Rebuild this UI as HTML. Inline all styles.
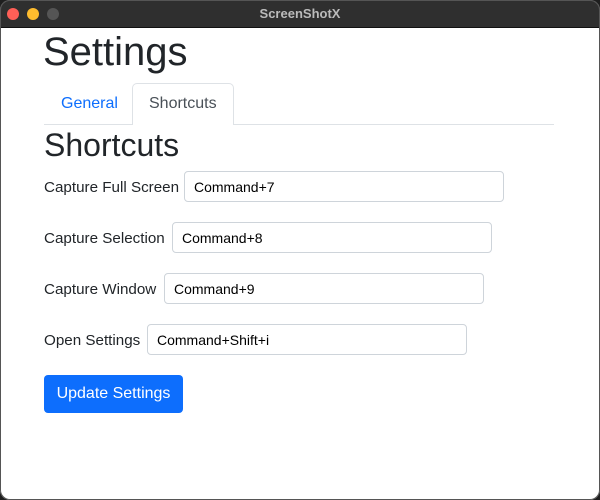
<!DOCTYPE html>
<html><head><style>
*{margin:0;padding:0;box-sizing:border-box}
body{width:600px;height:500px;background:#1e1e1e;font-family:"Liberation Sans",sans-serif;position:relative;overflow:hidden}
.win{position:absolute;left:0;top:0;width:600px;height:500px;background:#fff;border-radius:10px;overflow:hidden}
.bd{position:absolute;left:0;top:0;width:600px;height:500px;border-radius:10px;border:1px solid #555;pointer-events:none}
.tb{position:absolute;left:0;top:0;width:600px;height:28px;background:#2f2f2f;border-bottom:1px solid #111}
.dot{position:absolute;top:8px;width:12px;height:12px;border-radius:50%}
.tt{position:absolute;top:6px;width:600px;text-align:center;color:#bbb;font-size:13px;font-weight:bold}
.a{position:absolute;white-space:nowrap;color:#212529}
.l{font-size:15.2px}
.inp{position:absolute;height:31px;width:320px;border:1px solid #ced4da;border-radius:4px;font-size:14px;padding:7px 9px;color:#000}
</style></head><body>
<div class="win">
<div class="tb">
<div class="dot" style="left:7px;background:#fe5f57"></div>
<div class="dot" style="left:27px;background:#febc2e"></div>
<div class="dot" style="left:47px;background:#555"></div>
<div class="tt">ScreenShotX</div>
</div>
<div class="a" style="left:43px;top:30px;font-size:40px;font-weight:500">Settings</div>
<div style="position:absolute;left:44px;top:124px;width:510px;height:1px;background:#dee2e6"></div>
<div style="position:absolute;left:132px;top:83px;width:102px;height:42px;border:1px solid #dee2e6;border-bottom:none;border-radius:5px 5px 0 0;background:#fff"></div>
<div class="a" style="left:61px;top:95px;font-size:16px;color:#0d6efd">General</div>
<div class="a" style="left:149px;top:95px;font-size:16px;color:#495057">Shortcuts</div>
<div class="a" style="left:44px;top:127px;font-size:32px;font-weight:500">Shortcuts</div>

<div class="a l" style="left:44px;top:179px">Capture Full Screen</div>
<div class="inp" style="left:184px;top:171px">Command+7</div>
<div class="a l" style="left:44px;top:230px">Capture Selection</div>
<div class="inp" style="left:172px;top:222px">Command+8</div>
<div class="a l" style="left:44px;top:281px">Capture Window</div>
<div class="inp" style="left:164px;top:273px">Command+9</div>
<div class="a l" style="left:44px;top:332px">Open Settings</div>
<div class="inp" style="left:147px;top:324px">Command+Shift+i</div>

<div style="position:absolute;left:44px;top:375px;width:139px;height:38px;background:#0d6efd;border-radius:4px;color:#fff;font-size:16px;text-align:center;line-height:38px">Update Settings</div>
</div>
<div class="bd"></div>
</body></html>
